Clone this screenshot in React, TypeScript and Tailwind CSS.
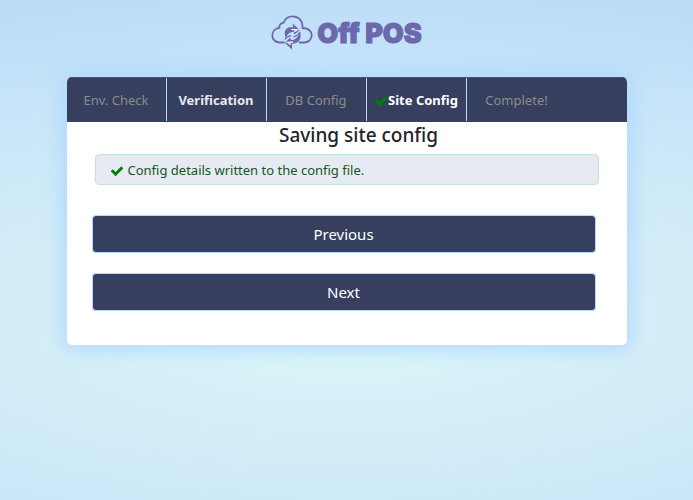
import React from "react";

type Step = { label: string; state: "idle" | "visited" | "active" };

const steps: Step[] = [
  { label: "Env. Check", state: "idle" },
  { label: "Verification", state: "visited" },
  { label: "DB Config", state: "idle" },
  { label: "Site Config", state: "active" },
  { label: "Complete!", state: "idle" },
];

const stepColors = {
  idle: "text-[#8c8c8c]",
  visited: "font-bold text-[#e8e8ee]",
  active: "font-bold text-white",
};

function CheckIcon() {
  return (
    <svg viewBox="0 0 1792 1792" className="inline-block h-[14px] w-[14px] shrink-0 fill-[#008000]" aria-hidden="true">
      <path d="M1671 566q0 40-28 68l-724 724-136 136q-28 28-68 28t-68-28l-136-136-362-362q-28-28-28-68t28-68l136-136q28-28 68-28t68 28l294 295 656-657q28-28 68-28t68 28l136 136q28 28 28 68z" />
    </svg>
  );
}

function Logo() {
  return (
    <div className="flex h-9 items-center justify-center gap-1 text-[#6b68ae]">
      <svg viewBox="0 0 42 36" className="h-9 w-[42px]" fill="none" aria-hidden="true">
        <path
          d="M13 27.500H9C4.500 27.500 1.300 24.500 1.300 20.500C1.300 16.500 4 13.200 8.500 12.800C7.800 10.500 9.500 8 12.500 7.800C14 3.500 17.500 1.300 21.500 1.300C27.500 1.300 31.500 5.500 31.500 11.500V13C37 13 40.700 16 40.700 20.300C40.700 24.500 37.500 27.500 33 27.500H28.500"
          stroke="currentColor"
          strokeWidth="1.8"
          strokeLinecap="round"
          strokeLinejoin="round"
        />
        <path d="M14 20.500C12.500 14.500 16.500 11.500 22 12L21.800 8.500L28.500 15L23.500 19.800L22.800 17C19 16.500 16.500 18.500 14.800 23Z" fill="currentColor" />
        <path d="M29.500 18.500C30.500 25 27 28.800 21 28.800V34.500L14 28L19 22.500L20 25C24.500 25 27 22.500 28.700 17Z" fill="currentColor" />
        <path d="M13.800 24.500C15.500 22 17.500 20.800 20 20.600M29.300 16.800C27.500 19.800 25.500 21.300 22.500 21.800" stroke="currentColor" strokeWidth="1.200" />
        <path d="M21 14.500L26 14.800L23.800 16.500M21.500 27L16.800 27.500L19.200 29.200" stroke="#f6ecff" strokeWidth="1.500" strokeLinecap="round" />
      </svg>
      <span className="pt-0.5 font-['Inter',sans-serif] text-[27px] leading-9 font-black [-webkit-text-stroke:1px_#6b68ae]">Off POS</span>
    </div>
  );
}

function WizardButton({ children }: { children: React.ReactNode }) {
  return (
    <button
      type="button"
      className="h-[38px] w-full rounded border border-[#b3d7ff] bg-[#373f5e] text-[15px] leading-6 text-white"
    >
      {children}
    </button>
  );
}

export default function App() {
  return (
    <div className="min-h-screen bg-[radial-gradient(ellipse_130%_66%_at_50%_64%,#def8f8_0%,#d4edf8_36%,#cde9f7_56%,#c8e5f9_70%,#bddcf7_100%)] px-4 pt-[15px] font-['Noto_Sans','Open_Sans',sans-serif]">
      <Logo />
      <main className="mx-auto mt-[26px] max-w-[560px] overflow-hidden rounded-[5px] bg-white pb-[34px] shadow-[0_0_20px_4px_#aed8ff]">
        <ol className="flex h-[45px] border-t border-[#4c5575] bg-[#373f5e] pb-px text-[13px]">
          {steps.map((step, i) => (
            <li
              key={step.label}
              aria-current={step.state === "active" ? "step" : undefined}
              className={`flex w-[100px] items-center justify-center pt-0.5 whitespace-nowrap ${
                i < steps.length - 1 ? "border-r border-[#b3d7ff]" : ""
              } ${stepColors[step.state]}`}
            >
              {step.state === "active" && <CheckIcon />}
              {step.label}
            </li>
          ))}
        </ol>
        <h1 className="pl-6 text-center text-[19px] leading-[26px] font-medium text-[#212529]">Saving site config</h1>
        <div
          role="status"
          className="mx-auto mt-1.5 flex h-[31px] w-9/10 items-center gap-1 rounded border border-[#c3e6cb] bg-[#e7eaf3] pt-0.5 pl-3.5 text-[13px] text-[#155724]"
        >
          <CheckIcon />
          Config details written to the config file.
        </div>
        <div className="mt-[30px] flex flex-col gap-5 pr-[31px] pl-[25px]">
          <WizardButton>Previous</WizardButton>
          <WizardButton>Next</WizardButton>
        </div>
      </main>
    </div>
  );
}
